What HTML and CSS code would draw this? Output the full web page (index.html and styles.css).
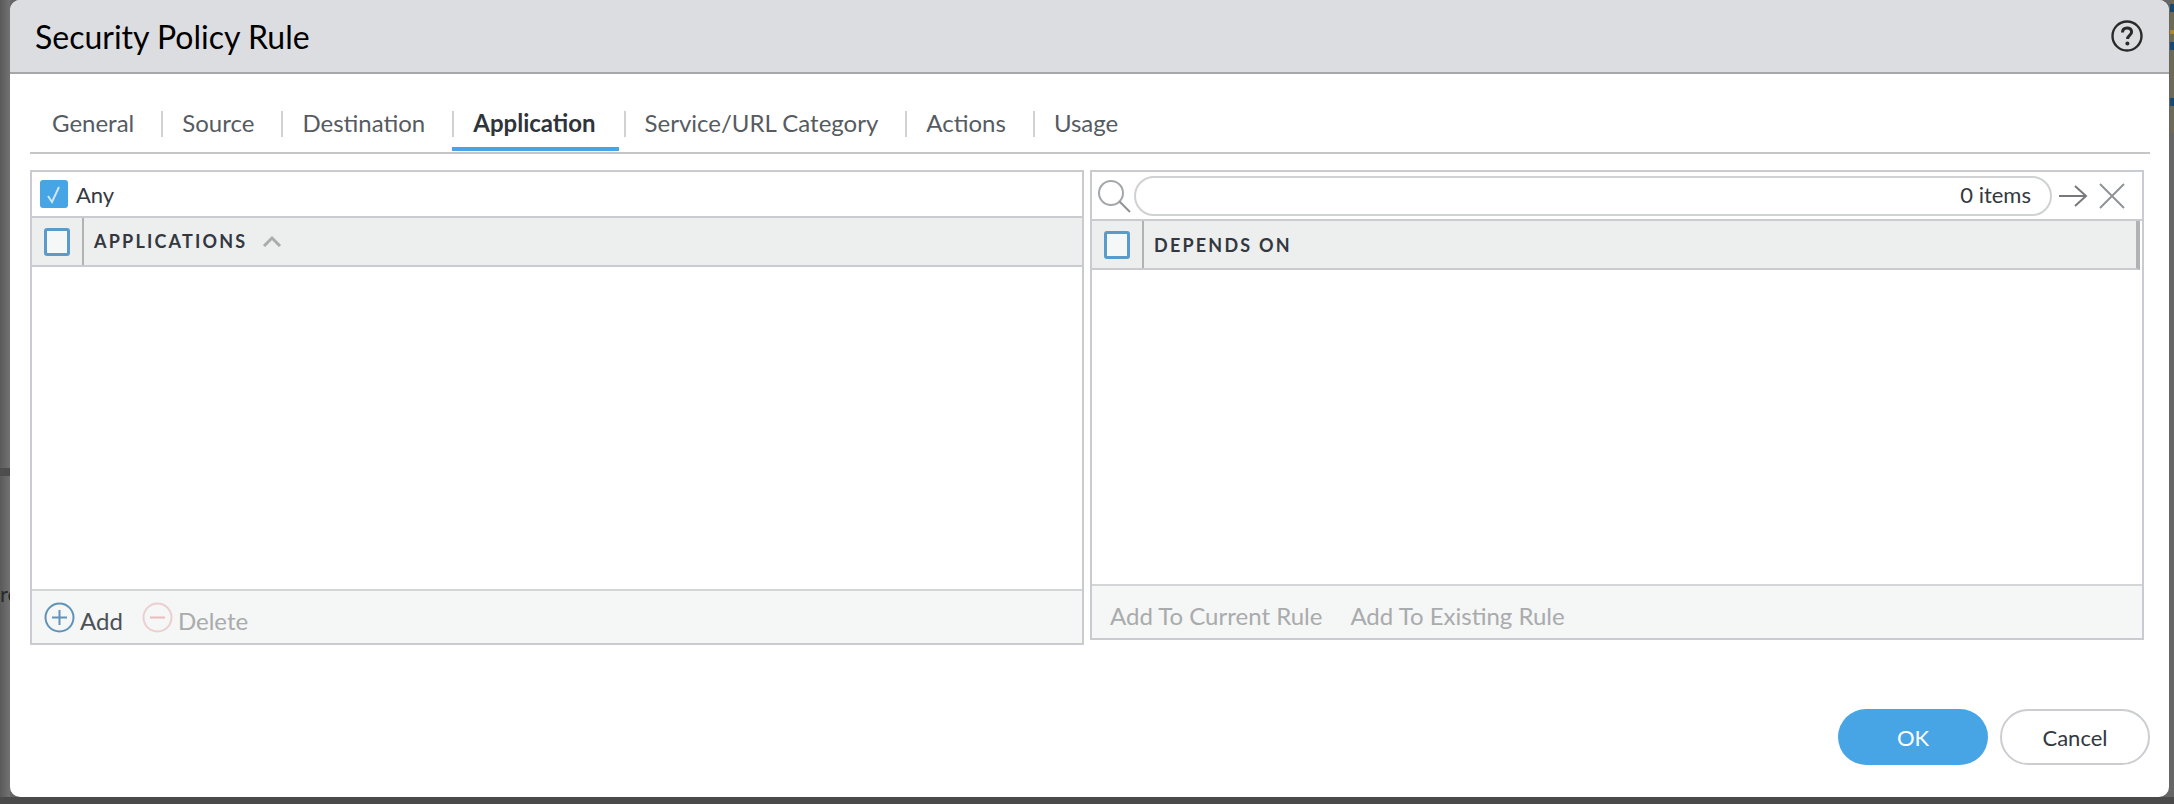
FILE: index.html
```html
<!DOCTYPE html>
<html lang="en">
<head>
  <meta charset="UTF-8">
  <title>Security Policy Rule</title>
  <link rel="stylesheet" href="styles.css">
</head>
<body>

  <div class="behind-text">rc</div>

  <div class="dialog">
    <div class="dialog-header">
      <h1>Security Policy Rule</h1>
      <svg class="help" width="32" height="32" viewBox="0 0 32 32">
        <circle cx="16" cy="16" r="14.5" fill="none" stroke="#2a2a2a" stroke-width="2.4"/>
        <path d="M11.500 12.500c0-3 2-4.600 4.600-4.600s4.500 1.600 4.500 4c0 3.400-4 3.600-4 7" fill="none" stroke="#2a2a2a" stroke-width="3"/>
        <circle cx="16.400" cy="23.400" r="2" fill="#2a2a2a"/>
      </svg>
    </div>

    <div class="tabs">
      <a class="tab">General</a>
      <a class="tab">Source</a>
      <a class="tab">Destination</a>
      <a class="tab active">Application</a>
      <a class="tab">Service/URL Category</a>
      <a class="tab">Actions</a>
      <a class="tab">Usage</a>
    </div>

    <div class="panels">
      <div class="panel panel-left">
        <div class="any-row">
          <span class="check-on">
            <svg width="28" height="28" viewBox="0 0 28 28"><path d="M8 16l4 6 7-15" fill="none" stroke="#cfe6f7" stroke-width="2"/></svg>
          </span>
          <span>Any</span>
        </div>
        <div class="grid-head">
          <div class="head-check"><span class="check-off"></span></div>
          <div class="head-title">APPLICATIONS</div>
          <svg class="caret" width="20" height="12" viewBox="0 0 20 12"><path d="M2 11l8-8 8 8" fill="none" stroke="#a9adad" stroke-width="3"/></svg>
        </div>
        <div class="grid-body"></div>
        <div class="panel-foot">
          <a class="foot-btn">
            <svg width="31" height="31" viewBox="0 0 31 31">
              <circle cx="15.500" cy="15.500" r="14" fill="none" stroke="#5f93b8" stroke-width="2"/>
              <path d="M15.500 8v15M8 15.500h15" stroke="#5f93b8" stroke-width="2"/>
            </svg>
            <span class="foot-label">Add</span>
          </a>
          <a class="foot-btn disabled">
            <svg width="31" height="31" viewBox="0 0 31 31">
              <circle cx="15.500" cy="15.500" r="14" fill="none" stroke="#eccfd0" stroke-width="2"/>
              <path d="M8 15.500h15" stroke="#e8bcbd" stroke-width="2"/>
            </svg>
            <span class="foot-label">Delete</span>
          </a>
        </div>
      </div>

      <div class="panel panel-right">
        <div class="search-row">
          <svg class="search-icon" width="34" height="34" viewBox="0 0 34 34">
            <circle cx="14" cy="14" r="12" fill="none" stroke="#a4a7aa" stroke-width="2"/>
            <path d="M22.500 22.500L33 33" stroke="#8f9396" stroke-width="2"/>
          </svg>
          <div class="search-box">0 items</div>
          <svg class="arrow" width="30" height="26" viewBox="0 0 30 26"><path d="M1 13h27M17 3l11 10-11 10" fill="none" stroke="#77797c" stroke-width="2"/></svg>
          <svg class="close" width="26" height="26" viewBox="0 0 26 26"><path d="M1 1l24 24M25 1L1 25" fill="none" stroke="#909396" stroke-width="2"/></svg>
        </div>
        <div class="grid-head grid-head-right">
          <div class="head-check"><span class="check-off"></span></div>
          <div class="head-title">DEPENDS ON</div>
        </div>
        <div class="grid-body"></div>
        <div class="panel-foot panel-foot-right">
          <a class="foot-btn disabled"><span class="foot-label">Add To Current Rule</span></a>
          <a class="foot-btn disabled"><span class="foot-label">Add To Existing Rule</span></a>
        </div>
      </div>
    </div>

    <div class="actions">
      <button class="btn-ok">OK</button>
      <button class="btn-cancel">Cancel</button>
    </div>
  </div>

</body>
</html>
```

FILE: styles.css
```css
html, body {
  height: 100%;
}

body {
  margin: 0;
  overflow: hidden;
  background-color: #666;
  background-image:
    linear-gradient(#174a73, #174a73),
    linear-gradient(#174a73, #174a73),
    linear-gradient(#174a73, #174a73),
    linear-gradient(#b0882a, #b0882a),
    linear-gradient(#6e6a55, #6e6a55),
    linear-gradient(#4e4e4e, #4e4e4e),
    linear-gradient(to right, #4a4a4a, #4a4a4a),
    linear-gradient(to right, #5a5a5a, #727272);
  background-repeat: no-repeat;
  background-size: 4px 8px, 4px 8px, 4px 8px, 4px 4px, 4px 133px, 10px 8px, 100% 7px, 10px 100%;
  background-position: right 0 top 4px, right 0 top 42px, right 0 top 98px, right 0 top 30px, right 0 top 0, 0 468px, 0 100%, 0 0;
  font-family: Lato, sans-serif;
  font-size: 22px;
  color: #333840;
}

.behind-text {
  position: absolute;
  left: 0;
  top: 580px;
  width: 10px;
  overflow: hidden;
  text-align: right;
  color: #26292c;
}

.dialog {
  position: relative;
  width: 2159px;
  height: 797px;
  margin-left: 10px;
  background: #fff;
  border-radius: 10px;
  overflow: hidden;
  display: flex;
  flex-direction: column;
}

.dialog-header {
  height: 72px;
  flex: none;
  display: flex;
  align-items: center;
  justify-content: space-between;
  padding: 0 26px 0 25px;
  background: #dcdde0;
  border-bottom: 2px solid #a5a7a9;
}

h1 {
  margin: 0;
  font-size: 32px;
  font-weight: 400;
  color: #000;
}

.tabs {
  flex: none;
  height: 78px;
  margin: 0 19px 0 20px;
  display: flex;
  align-items: flex-end;
  border-bottom: 2px solid #c4c6c8;
}

.tab {
  position: relative;
  height: 42px;
  padding: 0 27px 0 21px;
  line-height: 26px;
  font-size: 24px;
  color: #565b61;
}

.tab:first-child {
  padding-left: 22px;
}

.tab + .tab::before {
  content: "";
  position: absolute;
  left: 0;
  top: 1px;
  height: 26px;
  width: 2px;
  background: #cfd1d3;
}

.tab.active {
  padding-right: 28px;
  font-weight: 700;
  color: #2f343a;
}

.tab.active::after {
  content: "";
  position: absolute;
  left: 0;
  right: 5px;
  bottom: 1px;
  height: 4px;
  background: #47a5e5;
}

.panels {
  flex: none;
  margin: 16px 25px 0 20px;
  display: flex;
  gap: 6px;
  align-items: flex-start;
}

.panel {
  box-sizing: border-box;
  border: 2px solid #c9cbd0;
  display: flex;
  flex-direction: column;
}

.panel-left {
  width: 1054px;
  height: 475px;
}

.panel-right {
  width: 1054px;
  height: 470px;
}

.any-row {
  flex: none;
  height: 44px;
  display: flex;
  align-items: center;
  gap: 8px;
  padding-left: 8px;
  border-bottom: 2px solid #c9cbd0;
}

.check-on {
  width: 28px;
  height: 28px;
  border-radius: 3px;
  background: #47a5e5;
}

.check-on svg {
  display: block;
}

.grid-head {
  flex: none;
  height: 47px;
  display: flex;
  align-items: center;
  background: #edeeee;
  border-bottom: 2px solid #c9cbd0;
}

.head-check {
  width: 52px;
  height: 100%;
  box-sizing: border-box;
  flex: none;
  display: flex;
  align-items: center;
  padding-left: 12px;
  border-right: 2px solid #b0b2b5;
}

.check-off {
  box-sizing: border-box;
  width: 26px;
  height: 28px;
  border: 3px solid #5a9bc9;
  border-radius: 3px;
  background: #f6f7f7;
}

.head-title {
  margin-left: 10px;
  margin-bottom: 2px;
  font-size: 18px;
  font-weight: 700;
  letter-spacing: 2.2px;
  color: #333840;
}

.caret {
  margin-left: 15px;
  margin-bottom: 2px;
}

.grid-head-right {
  height: 47px;
  border-right: 4px solid #b0b2b5;
  margin-right: 2px;
}

.grid-head-right .head-title {
  margin-bottom: 0;
}

.grid-body {
  flex: 1;
}

.panel-foot {
  flex: none;
  height: 52px;
  display: flex;
  align-items: center;
  gap: 19px;
  padding-left: 12px;
  background: #f5f6f6;
  border-top: 2px solid #d3d5d7;
}

.panel-foot-right {
  gap: 28px;
  padding-left: 18px;
}

.foot-btn {
  display: flex;
  align-items: center;
  gap: 5px;
  font-size: 24px;
  color: #4c5157;
}

.foot-btn.disabled {
  color: #a9abac;
}

.foot-label {
  padding-top: 6px;
}

.search-row {
  flex: none;
  height: 47px;
  display: flex;
  align-items: center;
  padding-left: 5px;
  border-bottom: 2px solid #c9cbd0;
}

.search-icon {
  flex: none;
}

.search-box {
  box-sizing: border-box;
  width: 918px;
  height: 40px;
  margin-left: 3px;
  padding-right: 19px;
  border: 2px solid #cfd1d3;
  border-radius: 20px;
  text-align: right;
  line-height: 34px;
  font-size: 22px;
}

.arrow {
  margin-left: 6px;
}

.close {
  margin-left: 11px;
}

.actions {
  flex: 1;
  display: flex;
  justify-content: flex-end;
  gap: 12px;
  padding: 64px 19px 0 0;
}

button {
  width: 150px;
  height: 56px;
  box-sizing: border-box;
  border-radius: 28px;
  font-family: Lato, sans-serif;
  font-size: 22px;
}

.btn-ok {
  border: none;
  background: #47a5e5;
  color: #fff;
}

.btn-cancel {
  border: 2px solid #cbcdd0;
  background: #fff;
  color: #333840;
}
```
